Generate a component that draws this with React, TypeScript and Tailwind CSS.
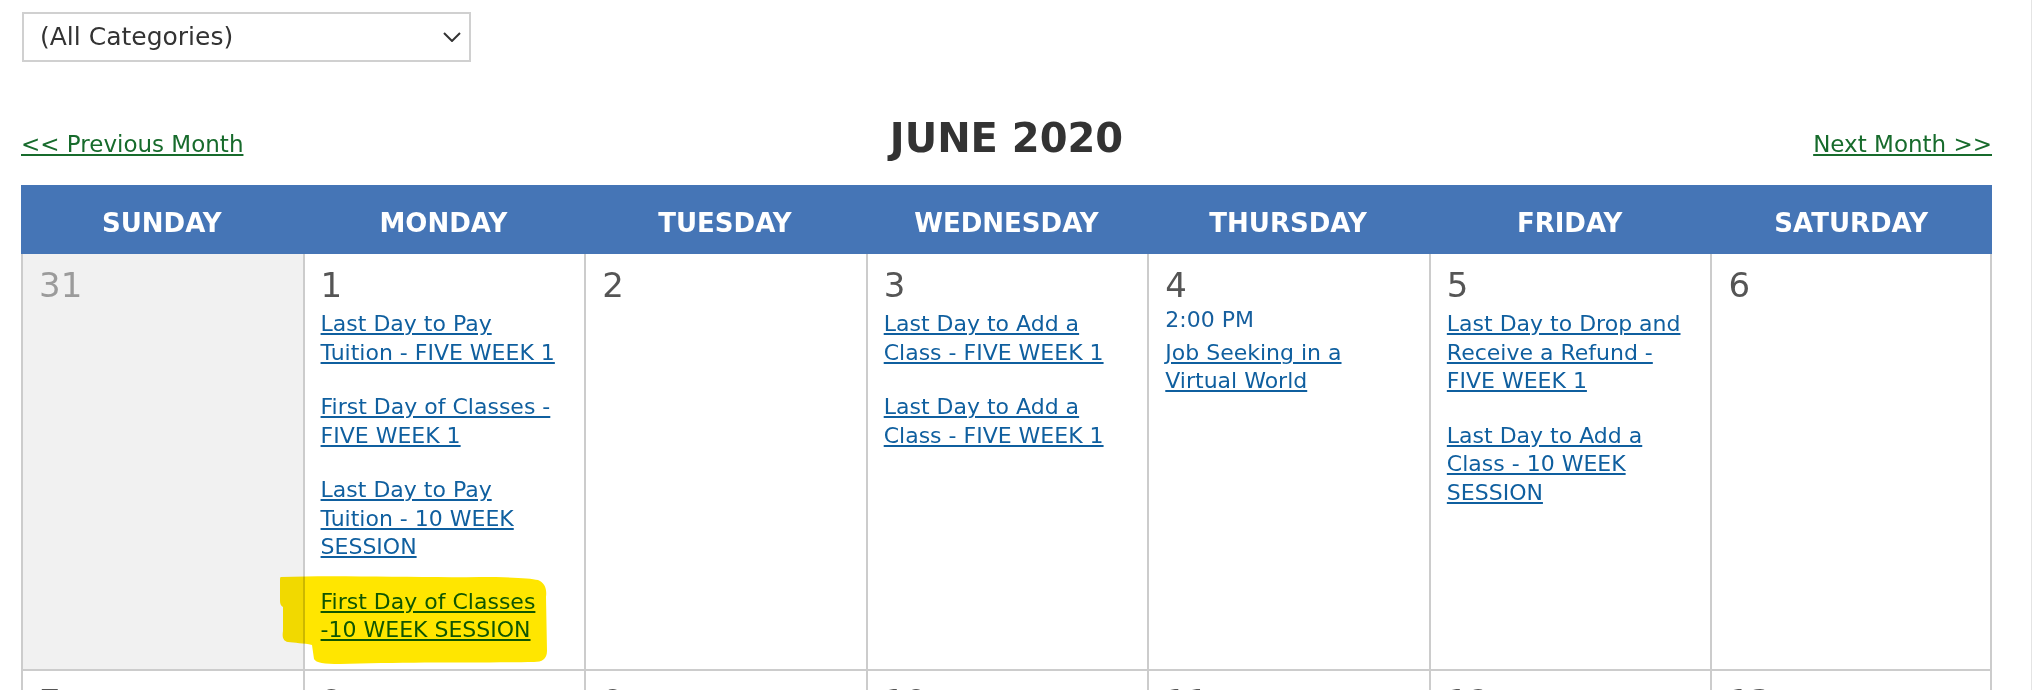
const weekDays = ["Sunday", "Monday", "Tuesday", "Wednesday", "Thursday", "Friday", "Saturday"]

type CalEvent = { title: string; time?: string; marked?: boolean }
type Day = { num: number; other?: boolean; events?: CalEvent[] }

const firstWeek: Day[] = [
  { num: 31, other: true },
  {
    num: 1,
    events: [
      { title: "Last Day to Pay Tuition - FIVE WEEK 1" },
      { title: "First Day of Classes - FIVE WEEK 1" },
      { title: "Last Day to Pay Tuition - 10 WEEK SESSION" },
      { title: "First Day of Classes -10 WEEK SESSION", marked: true },
    ],
  },
  { num: 2 },
  {
    num: 3,
    events: [
      { title: "Last Day to Add a Class - FIVE WEEK 1" },
      { title: "Last Day to Add a Class - FIVE WEEK 1" },
    ],
  },
  { num: 4, events: [{ title: "Job Seeking in a Virtual World", time: "2:00 PM" }] },
  {
    num: 5,
    events: [
      { title: "Last Day to Drop and Receive a Refund - FIVE WEEK 1" },
      { title: "Last Day to Add a Class - 10 WEEK SESSION" },
    ],
  },
  { num: 6 },
]

const secondWeek: Day[] = [7, 8, 9, 10, 11, 12, 13].map((num) => ({ num }))

function Marker() {
  // hand-drawn highlighter stroke, blended over the link text
  return (
    <svg
      className="pointer-events-none absolute -left-[41px] -top-[9px] mix-blend-multiply"
      width="268"
      height="90"
      viewBox="0 0 268 90"
    >
      <path
        d="M1 2 C60 0 140 3 200 2 C230 2 250 3 258 5 C265 8 267 14 266 22 L267 76 C267 84 262 87 254 87 C200 88 120 87 60 89 C44 89 36 88 34 84 L32 70 C24 68 14 68 8 67 C3 66 2 62 3 56 L3 32 C1 31 0 29 0 26 L0 6 C0 3 0 2 1 2 Z"
        fill="#ffe600"
      />
    </svg>
  )
}

function DayCell({ day, last }: { day: Day; last: boolean }) {
  return (
    <div
      className={`border-l-2 border-b-2 border-[#cccccc] px-[16px] pt-[11px] pb-[24px] ${last ? "border-r-2" : ""} ${day.other ? "bg-[#f1f1f1]" : "bg-white"}`}
    >
      <div className={`text-[34px] leading-[40px] ${day.other ? "text-[#9b9b9b]" : "text-[#555555]"}`}>{day.num}</div>
      {day.events && (
        <div className="mt-[1px] flex flex-col gap-[22px]">
          {day.events.map((ev, i) => (
            <div key={i} className="relative text-[22px] leading-[28.5px]">
              {ev.time && <div className="text-[#165f9e]">{ev.time}</div>}
              <div className="pt-[4px]">
                <a href="#" className="text-[#0f5f9f] underline decoration-2 underline-offset-[2px]">
                  {ev.title}
                </a>
              </div>
              {ev.marked && <Marker />}
            </div>
          ))}
        </div>
      )}
    </div>
  )
}

export default function App() {
  return (
    <div className="flex min-h-screen bg-white font-['DejaVu_Sans',sans-serif]">
      <div className="flex-1 pl-[21px] pt-[12px]">
        <div className="ml-px flex h-[50px] w-[449px] items-center justify-between border-2 border-[#d0d0d0] pl-[16px] pr-[8px] text-[25px] text-[#333333]">
          <span>(All Categories)</span>
          <svg width="18" height="10" viewBox="0 0 18 10" fill="none">
            <polyline points="1,1 9,9 17,1" stroke="#333333" strokeWidth="2" />
          </svg>
        </div>

        <div className="mt-[52px] grid w-[1971px] grid-cols-3 items-baseline">
          <a href="#" className="justify-self-start text-[23px] text-[#176b2c] underline decoration-2 underline-offset-[2px]">
            &lt;&lt; Previous Month
          </a>
          <h1 className="justify-self-center text-[40px] font-bold leading-[48px] text-[#333333]">JUNE 2020</h1>
          <a href="#" className="justify-self-end text-[23px] text-[#176b2c] underline decoration-2 underline-offset-[2px]">
            Next Month &gt;&gt;
          </a>
        </div>

        <div className="mt-[23px] w-[1971px]">
          <div className="grid h-[69px] grid-cols-7 bg-[#4575b6]">
            {weekDays.map((d) => (
              <div key={d} className="flex items-center justify-center pt-[7px] text-[26px] font-bold uppercase text-white">
                {d}
              </div>
            ))}
          </div>
          <div className="grid grid-cols-7">
            {firstWeek.map((day, i) => (
              <DayCell key={day.num} day={day} last={i === 6} />
            ))}
          </div>
          <div className="grid grid-cols-7">
            {secondWeek.map((day, i) => (
              <DayCell key={day.num} day={day} last={i === 6} />
            ))}
          </div>
        </div>
      </div>
      <div className="w-px bg-[#e4e4e4]" />
    </div>
  )
}
